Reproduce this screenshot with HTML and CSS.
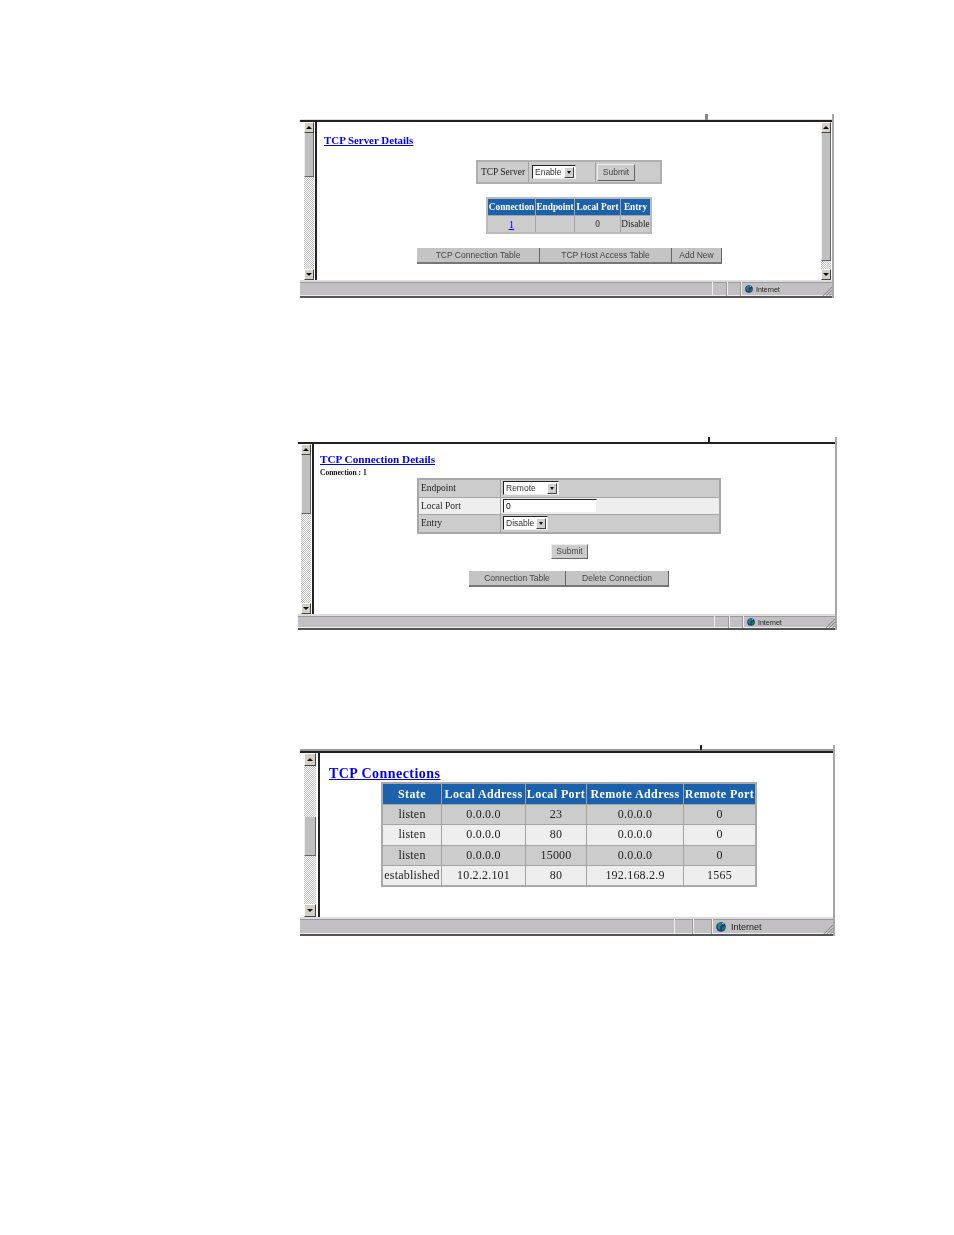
FILE: index.html
```html
<!DOCTYPE html>
<html lang="en">
<head>
    <meta charset="UTF-8">
    <meta name="viewport" content="width=device-width, initial-scale=1.0">
    <title>TCP Settings</title>
    <link rel="stylesheet" href="styles.css">
</head>
<body>
    <svg class="defs" width="0" height="0">
        <symbol id="globe" viewBox="0 0 10 10">
            <circle cx="5" cy="5" r="4.8" fill="#1a2fb0"/>
            <path d="M2 1.5 L5 1 L6 3 L4 4.5 L4.5 6.5 L3 8 L1.5 5 Z" fill="#1f9a3a"/>
            <path d="M6.5 4.5 L9.5 4 L9 7.5 L6.5 9 L5.5 7 Z" fill="#14802c"/>
            <path d="M6 1 L8 1.5 L7.5 2.5 L6.2 2.2 Z" fill="#9fc4ef"/>
        </symbol>
        <symbol id="grip" viewBox="0 0 12 12">
            <path d="M12 1 L1 12 M12 5 L5 12 M12 9 L9 12" stroke="#808080" stroke-width="1.2" fill="none"/>
        </symbol>
    </svg>

    <!-- TCP server page -->
    <div class="window server">
        <span class="tick"></span>
        <div class="top-line"></div>
        <div class="main">
            <div class="scrollbar">
                <div class="sb-btn up"></div>
                <div class="thumb"></div>
                <div class="track"></div>
                <div class="sb-btn down"></div>
            </div>
            <div class="viewport">
                <a class="title" href="#">TCP Server Details</a>
                <table class="form-table">
                    <tr>
                        <td class="fcol-label">TCP Server</td>
                        <td class="fcol-select"><div class="select"><span>Enable</span><i class="arrow"></i></div></td>
                        <td class="fcol-submit"><button class="btn">Submit</button></td>
                    </tr>
                </table>
                <table class="data-table">
                    <tr><th class="c1">Connection</th><th class="c2">Endpoint</th><th class="c3">Local Port</th><th class="c4">Entry</th></tr>
                    <tr><td><a href="#">1</a></td><td></td><td>0</td><td>Disable</td></tr>
                </table>
                <div class="btn-row">
                    <button class="bar-btn b1">TCP Connection Table</button>
                    <button class="bar-btn b2">TCP Host Access Table</button>
                    <button class="bar-btn b3">Add New</button>
                </div>
            </div>
            <div class="scrollbar right">
                <div class="sb-btn up"></div>
                <div class="thumb"></div>
                <div class="track"></div>
                <div class="sb-btn down"></div>
            </div>
        </div>
        <div class="statusbar">
            <div class="sb-fill"></div>
            <div class="sb-cell one"></div>
            <div class="sb-cell two"></div>
            <div class="sb-zone"><svg class="globe"><use href="#globe"/></svg><span>Internet</span></div>
            <svg class="grip"><use href="#grip"/></svg>
        </div>
    </div>

    <!-- connection details page -->
    <div class="window details">
        <span class="tick"></span>
        <div class="top-line"></div>
        <div class="main">
            <div class="scrollbar">
                <div class="sb-btn up"></div>
                <div class="thumb"></div>
                <div class="track"></div>
                <div class="sb-btn down"></div>
            </div>
            <div class="viewport">
                <a class="title" href="#">TCP Connection Details</a>
                <div class="subtitle">Connection : 1</div>
                <table class="edit-table">
                    <tr class="grey"><td class="label">Endpoint</td><td><div class="select wide"><span>Remote</span><i class="arrow"></i></div></td></tr>
                    <tr class="light"><td class="label">Local Port</td><td><input class="text-input" type="text" value="0"></td></tr>
                    <tr class="grey"><td class="label">Entry</td><td><div class="select"><span>Disable</span><i class="arrow"></i></div></td></tr>
                </table>
                <button class="btn submit">Submit</button>
                <div class="btn-row">
                    <button class="bar-btn b1">Connection Table</button>
                    <button class="bar-btn b2">Delete Connection</button>
                </div>
            </div>
        </div>
        <div class="statusbar">
            <div class="sb-fill"></div>
            <div class="sb-cell one"></div>
            <div class="sb-cell two"></div>
            <div class="sb-zone"><svg class="globe"><use href="#globe"/></svg><span>Internet</span></div>
            <svg class="grip"><use href="#grip"/></svg>
        </div>
    </div>

    <!-- connections list page -->
    <div class="window connections">
        <span class="tick"></span>
        <div class="top-line"></div>
        <div class="main">
            <div class="scrollbar">
                <div class="sb-btn up"></div>
                <div class="track first"></div>
                <div class="thumb"></div>
                <div class="track"></div>
                <div class="sb-btn down"></div>
            </div>
            <div class="viewport">
                <a class="title" href="#">TCP Connections</a>
                <table class="conn-table">
                    <tr><th class="k1">State</th><th class="k2">Local Address</th><th class="k3">Local Port</th><th class="k4">Remote Address</th><th class="k5">Remote Port</th></tr>
                    <tr class="grey"><td>listen</td><td>0.0.0.0</td><td>23</td><td>0.0.0.0</td><td>0</td></tr>
                    <tr class="light"><td>listen</td><td>0.0.0.0</td><td>80</td><td>0.0.0.0</td><td>0</td></tr>
                    <tr class="grey"><td>listen</td><td>0.0.0.0</td><td>15000</td><td>0.0.0.0</td><td>0</td></tr>
                    <tr class="light"><td>established</td><td>10.2.2.101</td><td>80</td><td>192.168.2.9</td><td>1565</td></tr>
                </table>
            </div>
        </div>
        <div class="statusbar">
            <div class="sb-fill"></div>
            <div class="sb-cell one"></div>
            <div class="sb-cell two"></div>
            <div class="sb-zone"><svg class="globe"><use href="#globe"/></svg><span>Internet</span></div>
            <svg class="grip"><use href="#grip"/></svg>
        </div>
    </div>
</body>
</html>
```
FILE: styles.css
```css
body {
    margin: 0;
    padding-top: 114px;
    background: #ffffff;
    font-family: "Liberation Serif", serif;
    color: #222;
}

.defs {
    position: absolute;
}

/* Window frame */
.window {
    position: relative;
    box-sizing: border-box;
    display: flex;
    flex-direction: column;
    border-right: 2px solid #a8a8a8;
    filter: blur(0.4px);
}

.window.server {
    width: 534px;
    height: 184px;
    margin-left: 300px;
}

.window.details {
    width: 539px;
    height: 193px;
    margin-left: 298px;
    margin-top: 139px;
}

.window.connections {
    width: 535px;
    height: 191px;
    margin-left: 300px;
    margin-top: 115px;
}

.tick {
    position: absolute;
    top: 0;
    width: 2px;
    height: 6px;
    background: #222;
}

.server .tick {
    left: 405px;
    width: 3px;
    background: #888;
}

.details .tick {
    left: 410px;
    top: 0;
    height: 5px;
}

.connections .tick {
    left: 400px;
    height: 5px;
}

.top-line {
    height: 2px;
    margin-top: 5px;
    background: #222;
    border-top: 1px solid #ddd;
}

.details .top-line {
    margin-top: 5px;
    border-top: none;
}

.connections .top-line {
    margin-top: 4px;
    height: 2px;
    border-top: 2px solid #999;
}

.main {
    flex: 1;
    display: flex;
    min-height: 0;
}

/* Scrollbars */
.scrollbar {
    width: 10px;
    margin-left: 4px;
    display: flex;
    flex-direction: column;
    flex-shrink: 0;
}

.details .scrollbar {
    margin-left: 3px;
}

.connections .scrollbar {
    width: 12px;
}

.scrollbar.right {
    margin-left: 1px;
    margin-right: 1px;
}

.sb-btn {
    box-sizing: border-box;
    height: 11px;
    background: #d4d0c8;
    border: 1px solid;
    border-color: #fff #444 #444 #fff;
    display: flex;
    align-items: center;
    justify-content: center;
}

.connections .sb-btn {
    height: 13px;
}

.sb-btn.up::before,
.sb-btn.down::before {
    content: "";
    border-left: 3px solid transparent;
    border-right: 3px solid transparent;
}

.sb-btn.up::before {
    border-bottom: 3px solid #111;
}

.sb-btn.down::before {
    border-top: 3px solid #111;
}

.thumb {
    box-sizing: border-box;
    background: #c0c0c0;
    border-right: 1px solid #666;
    border-bottom: 1px solid #666;
    border-left: 1px solid #eee;
}

.server .thumb {
    height: 44px;
}

.server .right .thumb {
    height: 128px;
}

.details .thumb {
    height: 59px;
}

.connections .thumb {
    height: 39px;
}

.track {
    flex: 1;
    background-color: #fff;
    background-image: conic-gradient(#c0c0c0 25%, #fff 0 50%, #c0c0c0 0 75%, #fff 0);
    background-size: 2px 2px;
}

.connections .track.first {
    flex: none;
    height: 51px;
}

.viewport {
    flex: 1;
    min-width: 0;
    border-left: 2px solid #222;
    margin-left: 1px;
    display: flex;
    flex-direction: column;
    align-items: flex-start;
}

.server .viewport {
    padding: 12px 0 0 7px;
}

.details .viewport {
    padding: 9px 11px 0 6px;
}

.connections .viewport {
    margin-left: 2px;
    border-left-width: 2px;
    padding: 13px 0 0 9px;
}

/* Headings */
.title {
    color: #0000ee;
    font-weight: bold;
    font-size: 10.9px;
    line-height: 13px;
}

.details .title {
    font-size: 11.2px;
    line-height: 13px;
}

.connections .title {
    font-size: 14px;
    line-height: 16px;
    letter-spacing: 0.45px;
}

.subtitle {
    font-size: 7.5px;
    font-weight: bold;
    line-height: 9px;
    margin-top: 2px;
    color: #111;
}

/* Tables */
table {
    border-collapse: collapse;
    table-layout: fixed;
    text-align: center;
}

td, th {
    padding: 0;
    border: 1px solid #a4a4a4;
}

th {
    background: #1b61ab;
    color: #fff;
    font-weight: bold;
}

.form-table {
    width: 186px;
    height: 24px;
    margin: 13px 0 0 152px;
    background: #ccc;
    border: 2px solid #b0b0b0;
    font-size: 9.5px;
}

.fcol-label {
    width: 50px;
}

.fcol-select {
    width: 63px;
    padding-left: 3px;
}

.fcol-submit {
    padding-left: 1px;
    text-align: left;
}

.data-table {
    width: 166px;
    margin: 13px 0 0 162px;
    border: 2px solid #bbb;
    font-size: 9.3px;
}

.data-table th {
    height: 16px;
}

.data-table td {
    height: 16px;
    background: #ccc;
}

.data-table a {
    color: #0000ee;
    font-size: 11px;
}

.c1 { width: 47px; }
.c2 { width: 38px; }
.c3 { width: 45px; }

.edit-table {
    width: 304px;
    margin: 1px 0 0 97px;
    border: 2px solid #a8a8a8;
    font-size: 9.5px;
    text-align: left;
}

.edit-table td {
    height: 16.5px;
    padding-left: 2px;
}

.edit-table .label {
    width: 79px;
}

.grey td {
    background: #ccc;
}

.light td {
    background: #eee;
}

.conn-table {
    width: 376px;
    margin: 0 0 0 52px;
    border: 2px solid #aaa;
    font-size: 12px;
    letter-spacing: 0.2px;
}

.conn-table th {
    height: 20px;
    letter-spacing: 0.4px;
}

.conn-table td {
    height: 19.25px;
}

.k1 { width: 58px; }
.k2 { width: 83px; }
.k3 { width: 60px; }
.k4 { width: 96px; }

/* Form controls */
.select {
    box-sizing: border-box;
    width: 44px;
    height: 14px;
    display: flex;
    align-items: center;
    justify-content: space-between;
    background: #fff;
    border: 1px solid;
    border-color: #222 #eee #eee #222;
    font-family: "Liberation Sans", sans-serif;
    font-size: 8.5px;
    padding-left: 2px;
    color: #333;
}

.edit-table .select {
    width: 45px;
}

.edit-table .select.wide {
    width: 56px;
}

.arrow {
    box-sizing: border-box;
    width: 10px;
    height: 11px;
    margin-right: 1px;
    background: #d0d0d0;
    border: 1px solid;
    border-color: #fff #444 #444 #fff;
    display: flex;
    align-items: center;
    justify-content: center;
}

.arrow::before {
    content: "";
    border-left: 2px solid transparent;
    border-right: 2px solid transparent;
    border-top: 3px solid #111;
}

.text-input {
    box-sizing: border-box;
    display: block;
    width: 94px;
    height: 14px;
    padding: 0 0 0 2px;
    background: #fff;
    border: 1px solid;
    border-color: #222 #eee #eee #222;
    font-family: "Liberation Sans", sans-serif;
    font-size: 8.5px;
}

.btn {
    box-sizing: border-box;
    width: 38px;
    height: 17px;
    padding: 0;
    background: #ccc;
    border: 1px solid;
    border-color: #eee #666 #666 #eee;
    font-family: "Liberation Sans", sans-serif;
    font-size: 8.5px;
    color: #444;
}

.btn.submit {
    height: 15px;
    width: 37px;
    margin: 10px 0 0 231px;
}

.btn-row {
    display: flex;
    margin: 14px 0 0 93px;
}

.details .btn-row {
    margin: 12px 0 0 149px;
}

.bar-btn {
    box-sizing: border-box;
    height: 16px;
    padding: 0;
    background: #c4c4c4;
    border: none;
    border-right: 1px solid #666;
    border-bottom: 2px solid #777;
    font-family: "Liberation Sans", sans-serif;
    font-size: 8.5px;
    color: #444;
}

.server .b1 { width: 123px; }
.server .b2 { width: 132px; }
.server .b3 { width: 50px; }
.details .b1 { width: 97px; }
.details .b2 { width: 103px; }

/* Status bar */
.statusbar {
    box-sizing: border-box;
    display: flex;
    align-items: stretch;
    height: 18px;
    background: #c2c0c2;
    border-top: 2px solid #ddd;
    border-bottom: 2px solid #555;
    box-shadow: inset 0 1px 0 #999, inset 0 -1px 0 #eee;
}

.details .statusbar {
    height: 16px;
}

.connections .statusbar {
    height: 19px;
}

.sb-fill {
    flex: 1;
}

.sb-cell {
    width: 13px;
    border-left: 1px solid #eee;
    border-right: 1px solid #999;
}

.sb-cell.two {
    width: 12px;
}

.connections .sb-cell {
    width: 17px;
}

.sb-zone {
    display: flex;
    align-items: center;
    gap: 3px;
    width: 77px;
    padding-left: 3px;
    border-left: 1px solid #eee;
    font-family: "Liberation Sans", sans-serif;
    font-size: 7px;
    color: #222;
}

.details .sb-zone {
    width: 78px;
}

.connections .sb-zone {
    width: 107px;
    gap: 5px;
    font-size: 9px;
}

.globe {
    width: 8px;
    height: 8px;
}

.connections .globe {
    width: 10px;
    height: 10px;
}

.grip {
    width: 10px;
    height: 10px;
    align-self: flex-end;
    flex-shrink: 0;
}
```
